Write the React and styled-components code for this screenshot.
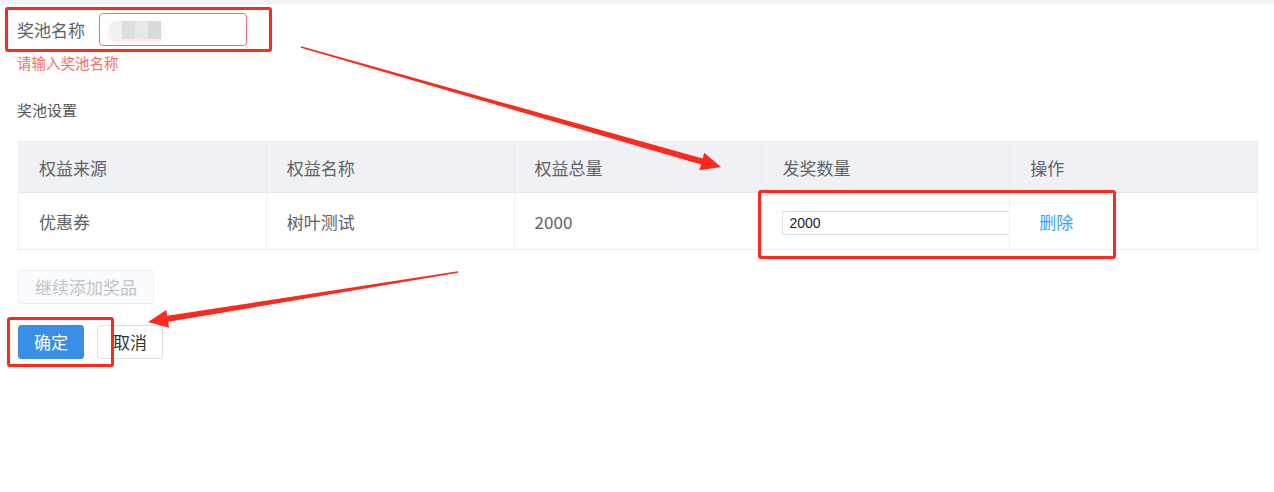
import React from "react"
import styled, { createGlobalStyle } from "styled-components"

const GlobalStyle = createGlobalStyle`
  html, body {
    margin: 0;
    padding: 0;
    background: #fff;
    font-family: "Noto Sans CJK SC", "Noto Sans", sans-serif;
  }
`

const Page = styled.div`
  position: relative;
  width: 1274px;
  height: 492px;
  overflow: hidden;
`

const TopStrip = styled.div`
  height: 4px;
  background: #f0f2f5;
`

const Form = styled.div`
  padding: 9px 16px 0 17px;
`

const FieldRow = styled.div`
  display: flex;
  align-items: center;
  height: 33px;
`

const Label = styled.label`
  width: 82px;
  font-size: 17px;
  color: #606266;
  line-height: 33px;
`

const NameInput = styled.div`
  box-sizing: border-box;
  width: 148px;
  height: 33px;
  border: 1px solid #f56c6c;
  border-radius: 4px;
  background: #fff;
  display: flex;
  align-items: center;
  padding-left: 9px;
`

const Mosaic = styled.span`
  display: block;
  width: 52px;
  height: 18px;
  border-radius: 8px 0 0 8px;
  background: linear-gradient(
    to right,
    #f1f1f1 0 13px,
    #dedede 13px 26px,
    #e8e8e8 26px 39px,
    #dadada 39px 52px
  );
  box-shadow: 0 3px 6px rgba(255, 170, 170, 0.35);
`

const ErrorText = styled.div`
  margin-top: 7px;
  font-size: 14.5px;
  line-height: 20px;
  color: #f56c6c;
`

const SectionTitle = styled.div`
  margin-top: 27px;
  font-size: 15px;
  line-height: 20px;
  color: #555;
`

const Table = styled.table`
  margin-top: 21px;
  margin-left: 1px;
  width: 1240px;
  table-layout: fixed;
  border-collapse: collapse;
  border: 1px solid #ebeef5;
`

const Th = styled.th`
  height: 50px;
  padding: 0 20px;
  text-align: left;
  font-weight: normal;
  font-size: 17px;
  color: #606266;
  background: #f0f1f5;
  border-right: 1px solid #e8eaef;
  border-bottom: 1px solid #e6e8ed;
`

const Td = styled.td`
  height: 56px;
  padding: 0 ${p => (p.$action ? "29px" : "20px")};
  font-size: 17px;
  color: #606266;
  border-right: 1px solid #f0f1f4;
`

const QtyInput = styled.input`
  box-sizing: border-box;
  vertical-align: middle;
  width: 227px;
  height: 24px;
  border: 1px solid #dcdfe6;
  border-right: none;
  border-radius: 3px 0 0 3px;
  padding: 0 6px;
  font-family: "Liberation Sans", sans-serif;
  font-size: 14px;
  color: #222;
  outline: none;
`

const LinkButton = styled.span`
  color: #409eff;
  font-size: 17px;
  cursor: pointer;
`

const Button = styled.button`
  box-sizing: border-box;
  height: 34px;
  padding: 0 ${p => p.$pad || "15px"};
  border-radius: 3px;
  font-family: inherit;
  font-size: 17px;
  line-height: 32px;
  cursor: pointer;
  border: 1px solid ${p => (p.$primary ? "#3a8ee6" : p.$disabled ? "#ebeef5" : "#dcdfe6")};
  background: ${p => (p.$primary ? "#3a8ee6" : p.$disabled ? "#fafbfd" : "#fff")};
  color: ${p => (p.$primary ? "#fff" : p.$disabled ? "#c0c4cc" : "#333")};
`

const AddRow = styled.div`
  margin-top: 20px;
  margin-left: 1px;
`

const Actions = styled.div`
  margin-top: 21px;
  margin-left: 1px;
  display: flex;
  gap: 13px;
`

const Mark = styled.div`
  position: absolute;
  box-sizing: border-box;
  border: 3px solid #fb2a1f;
  border-radius: 3px;
  pointer-events: none;
`

const Overlay = styled.svg`
  position: absolute;
  left: 0;
  top: 0;
  pointer-events: none;
`

const columns = ["权益来源", "权益名称", "权益总量", "发奖数量", "操作"]

const App = () => {
  return (
    <Page>
      <GlobalStyle />
      <TopStrip />
      <Form>
        <FieldRow>
          <Label>奖池名称</Label>
          <NameInput>
            <Mosaic />
          </NameInput>
        </FieldRow>
        <ErrorText>请输入奖池名称</ErrorText>
        <SectionTitle>奖池设置</SectionTitle>
        <Table>
          <thead>
            <tr>
              {columns.map(c => (
                <Th key={c}>{c}</Th>
              ))}
            </tr>
          </thead>
          <tbody>
            <tr>
              <Td>优惠券</Td>
              <Td>树叶测试</Td>
              <Td>2000</Td>
              <Td>
                <QtyInput defaultValue="2000" />
              </Td>
              <Td $action>
                <LinkButton>删除</LinkButton>
              </Td>
            </tr>
          </tbody>
        </Table>
        <AddRow>
          <Button $disabled $pad="16px">继续添加奖品</Button>
        </AddRow>
        <Actions>
          <Button $primary>确定</Button>
          <Button>取消</Button>
        </Actions>
      </Form>

      <Mark style={{ left: 5, top: 7, width: 267, height: 45 }} />
      <Mark style={{ left: 758, top: 190, width: 358, height: 69 }} />
      <Mark style={{ left: 7, top: 317, width: 107, height: 50 }} />

      <Overlay width="1274" height="492" viewBox="0 0 1274 492">
        <polygon
          fill="#fb2a1f"
          points="301.2,46.2 702.6,158.6 704.3,152.8 721,167 699.3,170.2 701,164.4 300.8,47.8"
        />
        <polygon
          fill="#fb2a1f"
          points="457.9,271.2 167.2,315.8 166.3,309.9 148,322 169.1,327.7 168.2,321.8 458.1,272.8"
        />
      </Overlay>
    </Page>
  )
}

export default App
